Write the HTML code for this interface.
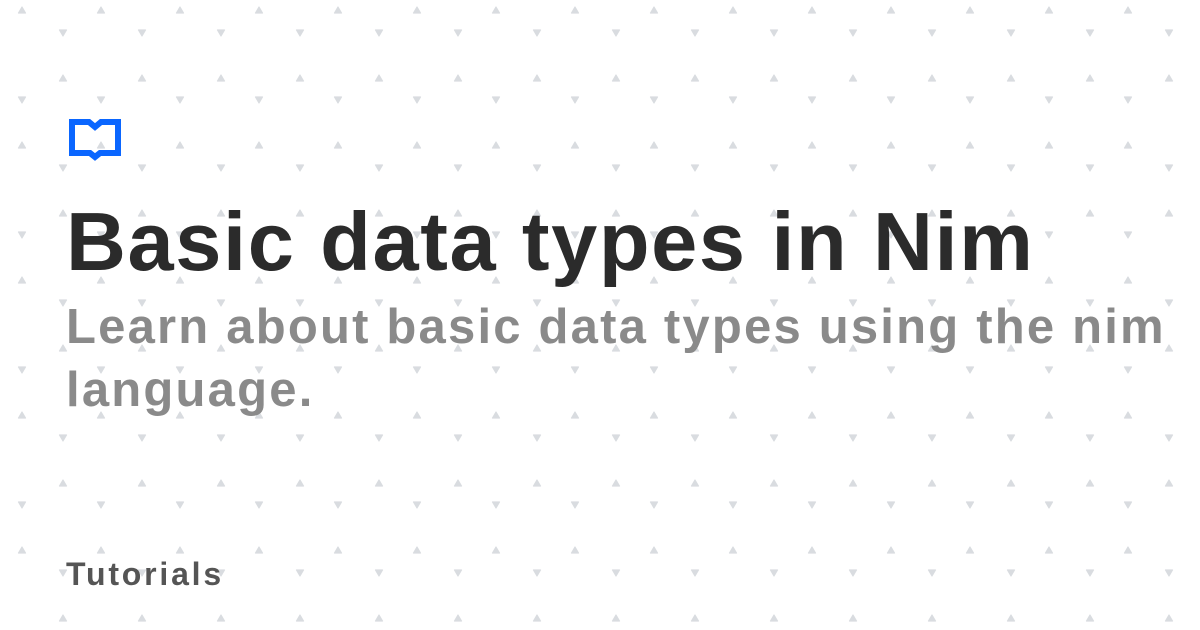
<!DOCTYPE html>
<html><head><style>
html,body{margin:0;padding:0}
body{width:1200px;height:630px;background:#fff;position:relative;overflow:hidden;font-family:"Liberation Sans",sans-serif}
svg.bg{position:absolute;left:0;top:0}
.t{position:absolute;left:66px;top:194px;font-size:83px;font-weight:bold;color:#2b2b2b;white-space:nowrap;letter-spacing:1.6px}
.s{position:absolute;left:66px;top:296px;font-size:49px;font-weight:bold;color:#8a8a8a;line-height:63px;width:1134px;letter-spacing:2.2px}
.c{position:absolute;left:66px;top:556px;font-size:32px;font-weight:bold;color:#555;letter-spacing:2.8px}
</style></head><body>
<svg class="bg" width="1200" height="630">
<defs>
<g id="u"><path d="M0 -3 L3.5 3 L-3.5 3 Z" fill="#d9dce0" stroke="#d9dce0" stroke-width="1.2" stroke-linejoin="round"/></g>
<g id="d"><path d="M0 3 L3.5 -3 L-3.5 -3 Z" fill="#d9dce0" stroke="#d9dce0" stroke-width="1.2" stroke-linejoin="round"/></g>
<pattern id="p" width="79" height="135" patternUnits="userSpaceOnUse" x="-18" y="0">
<use href="#u" x="40" y="10"/>
<use href="#d" x="2" y="33"/><use href="#d" x="81" y="33"/>
<use href="#u" x="2" y="78"/><use href="#u" x="81" y="78"/>
<use href="#d" x="40" y="100"/>
</pattern>
</defs>
<rect width="1200" height="630" fill="url(#p)"/>
<path d="M72 122 H89 L95 127 L101 122 H118 V153 H100 L95 157 L90 153 H72 Z" fill="none" stroke="#0a66ff" stroke-width="6" stroke-linejoin="miter"/>
</svg>
<div class="t">Basic data types in Nim</div>
<div class="s">Learn about basic data types using the nim language.</div>
<div class="c">Tutorials</div>
</body></html>
